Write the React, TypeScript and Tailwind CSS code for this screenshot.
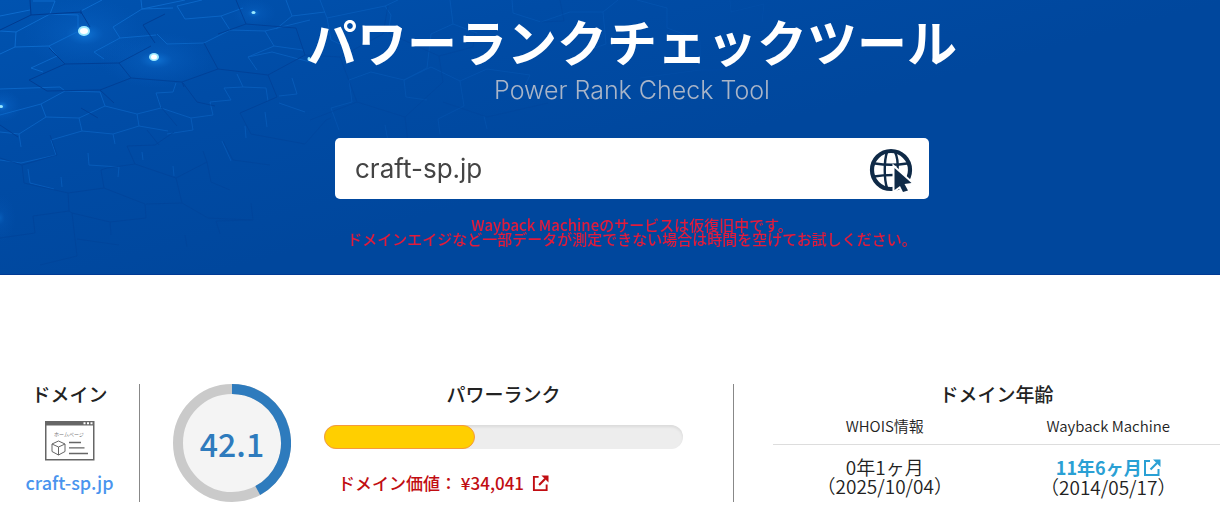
import React from "react";

function HexBackdrop() {
  return (
    <svg
      className="pointer-events-none absolute inset-0 h-full w-full"
      viewBox="0 0 1220 275"
      preserveAspectRatio="xMinYMin slice"
      fill="none"
      aria-hidden="true"
    >
      <defs>
        <radialGradient id="glow">
          <stop offset="0" stopColor="#1a8cf0" stopOpacity="0.75" />
          <stop offset="0.3" stopColor="#0f6fd4" stopOpacity="0.3" />
          <stop offset="1" stopColor="#0a62c8" stopOpacity="0" />
        </radialGradient>
        <linearGradient id="fade" gradientUnits="userSpaceOnUse" x1="100" y1="0" x2="240" y2="300">
          <stop offset="0" stopColor="#fff" stopOpacity="0.75" />
          <stop offset="0.35" stopColor="#fff" stopOpacity="0.45" />
          <stop offset="0.7" stopColor="#fff" stopOpacity="0.25" />
          <stop offset="1" stopColor="#fff" stopOpacity="0.2" />
        </linearGradient>
        <mask id="fadeMask">
          <rect width="1220" height="275" fill="url(#fade)" />
        </mask>
      </defs>
      <ellipse cx="85" cy="34" rx="62" ry="36" fill="url(#glow)" opacity="0.8" />
      <ellipse cx="156" cy="60" rx="56" ry="28" fill="url(#glow)" opacity="0.8" />
      <ellipse cx="254" cy="13" rx="22" ry="14" fill="url(#glow)" opacity="0.7" />
      <ellipse cx="2" cy="106" rx="20" ry="16" fill="url(#glow)" />
      <ellipse cx="0" cy="218" rx="16" ry="24" fill="url(#glow)" opacity="0.4" />
      <g mask="url(#fadeMask)">
        <g stroke="#1173d6" strokeWidth="1">
          <path d="M0 16 30 10M33 1 55 1 50 14 78 15 78 28M50 14 16 32 0 31M16 32 15 47 0 54M15 47 49 46 77 32M49 46 57 56 31 68 43 72M81 11 102 0M141 0 142 9 173 8M142 9 113 27 120 38M142 9 185 0M120 38 94 52 104 59M120 38 156 35M157 34 167 44 204 43M177 6 185 19 221 16 230 30 204 43M177 6 202 0M221 16 243 8M230 30 265 31 274 46 248 57 257 70M265 31 310 20M286 0 292 16 325 12M292 16 276 29M274 46 303 50" />
          <path d="M0 115 41 104 46 117 79 118 105 106 100 92 65 91 41 104M65 91 60 87 0 89M79 118 82 131 51 140 56 155 21 163 0 160M46 117 19 134 21 147M19 134 0 132M82 131 113 134 139 126 137 114 105 106M137 114 161 108 156 93 173 92 176 83M161 108 191 118 193 130 167 134M191 118 213 115 210 102 231 100 224 88 243 87 237 74M113 134 115 144M139 126 168 131" />
          <path d="M292 78 297 94 279 96M248 57 272 52 310 62M243 87 266 88 268 101M279 103 305 112M245 126 246 138M265 112 267 127M28 169 30 183 54 189M61 177 62 187M88 153 89 165 119 167M119 167 118 177M173 166 174 176M222 141 226 150 231 161M142 152 143 160" />
          <g opacity="0.7">
            <path d="M320 0 327 18 385 6 398 0M327 18 331 40 349 48M385 6 391 15 388 33M450 0 453 24 431 34 427 68 404 80M453 24 477 33M512 0 513 13 541 22 570 12 603 12M603 12 606 44 577 54M603 12 618 0M349 80 371 72 404 80 406 97M404 80 431 67 460 81 487 69M460 81 464 106 438 119M349 80 352 102 331 108M406 97 427 100M331 108 339 130M487 69 530 75 520 96" />
            <path d="M637 0 667 8 667 28 700 40M484 116 487 129M385 125 388 141M438 119 440 134" />
          </g>
          <path opacity="0.3" d="M700 40 701 62M730 0 731 12 764 4M764 4 762 22M640 78 700 70 736 70" />
        </g>
        <g stroke="#003486" strokeWidth="1">
          <path d="M30 0 31 15 81 12 90 27M81 10 81 14M31 15 0 30M49 48 65 64 119 63 151 46M119 63 131 78 182 82 218 69 204 43M143 25 155 43M143 25 165 14M65 64 29 80 47 91 100 90 131 78M236 0 246 24 218 34M246 24 296 28 305 55 268 75 218 69M268 75 277 97 240 113M183 83 197 102 215 106M182 82 184 87M100 90 114 103M81 108 98 118M0 125 18 137" />
          <path opacity="0.7" d="M161 107 177 126M147 130 159 145M127 146 155 145 174 132M127 146 135 164 107 168 101 170 104 188 68 193 24 183 22 165 0 158M50 135 57 155 22 165M104 188 145 204 146 218 110 222 72 213 69 211 68 193M135 164 176 178 182 203 146 204M176 178 207 162 203 151M207 162 211 182 230 190M223 141 233 160 270 165M240 113 251 134 305 144M182 203 208 218 252 220M33 216 35 233 0 238M33 216 69 211M72 213 77 256 40 265M77 239 119 245M110 222 111 235M185 235 187 247M251 203 253 220 216 221 220 234" />
          <path opacity="0.5" d="M305 55 340 57 357 102 310 120M340 57 383 34 388 6M388 33 439 56 443 82 405 117 357 102M405 117 408 143M439 56 473 47 475 33M560 0 564 21 540 22M443 102 487 117 548 103M305 144 326 120 331 118" />
        </g>
      </g>
      <g fill="#9be9ff">
        <ellipse cx="84" cy="31" rx="6" ry="5" />
        <ellipse cx="154" cy="57" rx="5" ry="4" />
        <ellipse cx="253.500" cy="12.500" rx="2" ry="1.500" />
        <ellipse cx="1" cy="106.500" rx="2" ry="1.500" />
        <ellipse cx="309" cy="59" rx="1.500" ry="2" />
      </g>
      <g fill="#fff">
        <ellipse cx="84" cy="31" rx="4" ry="3" />
        <ellipse cx="154" cy="57" rx="3" ry="2.500" />
      </g>
    </svg>
  );
}

function GlobeCursorIcon() {
  return (
    <svg className="h-[44px] w-[44px]" viewBox="0 0 44 44" fill="none" aria-hidden="true">
      <g stroke="#0f2a47">
        <circle cx="22" cy="22" r="19" strokeWidth="4.200" />
        <g strokeWidth="2.400">
          <path d="M18 4C15 13 15 31 18 40M26 4C29 10 29 17 28.500 23" />
          <path d="M6 15.500Q22 18 38 15.500M5 28.500Q14 27 24 27" />
        </g>
      </g>
      <path
        d="M25.500 20 42.500 35 35.500 36 39 42.500 34 44 31 38 25.500 42Z"
        fill="#0f2a47"
        stroke="#fff"
        strokeWidth="4"
        paintOrder="stroke"
      />
    </svg>
  );
}

function HomepageIcon() {
  return (
    <svg className="h-10 w-[50px]" viewBox="0 0 50 40" fill="none" role="img" aria-label="ホームページ">
      <rect x="0.750" y="0.750" width="48" height="38" fill="#fff" stroke="#666" strokeWidth="1.500" />
      <path d="M0 0H49V4.500H0Z" fill="#666" />
      <path d="M38.500 1.300h2v2h-2zM42 1.300h2v2h-2zM45.500 1.300h2v2h-2z" fill="#fff" />
      <text x="24" y="15" textAnchor="middle" fontSize="5" fill="#777" fontFamily="'Noto Sans CJK JP', sans-serif">
        ホームページ
      </text>
      <path
        d="M13.500 20 20 23V30.500L13.500 34 7 30.500V23ZM7 23 13.500 26 20 23M13.500 26V34"
        stroke="#666"
        strokeWidth="1"
        strokeLinejoin="round"
      />
      <path d="M24 21.500H36M24 26.800H39.500M24 32.500H43" stroke="#666" strokeWidth="1.300" />
    </svg>
  );
}

function ExternalIcon({ className }: { className: string }) {
  return (
    <svg className={className} viewBox="0 0 18 18" fill="none" aria-hidden="true">
      <path d="M7 2H2V16H15.500V10" stroke="currentColor" strokeWidth="2" />
      <path d="M7.500 10.500 14 4" stroke="currentColor" strokeWidth="2.200" />
      <path d="M10 0.500H17.500V8Z" fill="currentColor" />
    </svg>
  );
}

function Gauge({ value }: { value: number }) {
  const angle = (value / 100) * 2 * Math.PI;
  const x = 59 + 54 * Math.sin(angle);
  const y = 59 - 54 * Math.cos(angle);
  return (
    <div className="grid h-[118px] w-[118px] shrink-0 place-items-center">
      <svg className="col-start-1 row-start-1 h-full w-full" viewBox="0 0 118 118" fill="none" aria-hidden="true">
        <circle cx="59" cy="59" r="54" fill="#f4f4f4" stroke="#cacaca" strokeWidth="10" />
        <path d={`M59 5A54 54 0 0 1 ${x} ${y}`} stroke="#2e7bbd" strokeWidth="10" />
      </svg>
      <span className="col-start-1 row-start-1 text-[32px] leading-9 font-medium text-[#2e7bbd]">{value}</span>
    </div>
  );
}

export default function App() {
  return (
    <div className="min-h-screen overflow-x-hidden bg-white font-['Noto_Sans_CJK_JP','Noto_Sans',sans-serif] text-[#222]">
      <header className="relative border-b border-[#003a94] bg-[linear-gradient(165deg,#0053b0_0%,#004ca6_25%,#00479d_55%,#00479d_100%)] pb-7">
        <HexBackdrop />
        <div className="relative flex flex-col items-center pt-[10px] pl-[44px]">
          <h1 className="text-[50px] leading-[60px] font-bold whitespace-nowrap text-white">パワーランクチェックツール</h1>
          <p className="mt-1 font-['Inter',sans-serif] text-[25px] leading-8 font-light text-[#a9b5c8]">Power Rank Check Tool</p>
          <form
            className="mt-8 flex h-[61px] w-full max-w-[594px] items-center rounded-[5px] bg-white pr-4 pl-5"
            onSubmit={(e) => e.preventDefault()}
          >
            <input
              aria-label="ドメイン"
              defaultValue="craft-sp.jp"
              className="min-w-0 flex-1 bg-transparent font-['Inter',sans-serif] text-[26px] leading-9 text-[#444] outline-none"
            />
            <button type="submit" aria-label="チェック" className="pt-0.5">
              <GlobeCursorIcon />
            </button>
          </form>
          <p className="mt-[19px] text-center text-[15px] leading-[14px] font-medium whitespace-nowrap text-[#e21b3c]">
            Wayback Machineのサービスは仮復旧中です。
            <br />
            ドメインエイジなど一部データが測定できない場合は時間を空けてお試しください。
          </p>
        </div>
      </header>

      <main className="flex pt-[109px]">
        <section className="flex h-[118px] w-[140px] shrink-0 flex-col items-center border-r border-[#888]">
          <h2 className="text-[19px] leading-5 font-medium">ドメイン</h2>
          <div className="mt-[17px]">
            <HomepageIcon />
          </div>
          <a href="#domain" className="mt-[11px] text-[18px] leading-5 font-medium text-[#4a94ee]">
            craft-sp.jp
          </a>
        </section>

        <section className="flex h-[118px] w-[594px] shrink-0 border-r border-[#888] pr-[50px] pl-[33px]">
          <Gauge value={42.1} />
          <div className="ml-[33px] min-w-0 flex-1">
            <h2 className="text-center text-[19px] leading-5 font-medium">パワーランク</h2>
            <div className="mt-[21px] h-6 rounded-full bg-[#ededed] shadow-[inset_0_2px_3px_rgba(0,0,0,0.08)]">
              <div
                className="h-6 rounded-full border border-[#f59a3c] bg-[#ffcf00]"
                style={{ width: "42.1%" }}
              />
            </div>
            <a href="#value" className="mt-6 ml-[14px] flex items-center text-[17px] leading-5 font-medium text-[#c10d12]">
              <span>ドメイン価値： ¥34,041</span>
              <ExternalIcon className="ml-2 h-[17px] w-[17px]" />
            </a>
          </div>
        </section>

        <section className="ml-[39px] min-w-0 flex-1">
          <h2 className="text-center text-[19px] leading-5 font-medium">ドメイン年齢</h2>
          <table className="mt-2 w-full table-fixed text-center font-[350]">
            <thead>
              <tr className="border-b border-[#ddd] text-[15px] leading-5">
                <th scope="col" className="pt-1 pb-2 font-[350]">WHOIS情報</th>
                <th scope="col" className="pt-1 pb-2 font-[350]">Wayback Machine</th>
              </tr>
            </thead>
            <tbody>
              <tr className="text-[19px] leading-[19px] whitespace-nowrap">
                <td className="pt-3 align-top">
                  0年1ヶ月
                  <br />
                  （2025/10/04）
                </td>
                <td className="pt-3 align-top">
                  <a href="#wayback" className="inline-flex items-center text-[18px] leading-[19px] font-bold text-[#2aa0d4]">
                    11年6ヶ月
                    <ExternalIcon className="ml-px h-[18px] w-[18px]" />
                  </a>
                  <br />
                  （2014/05/17）
                </td>
              </tr>
            </tbody>
          </table>
        </section>
      </main>
    </div>
  );
}
